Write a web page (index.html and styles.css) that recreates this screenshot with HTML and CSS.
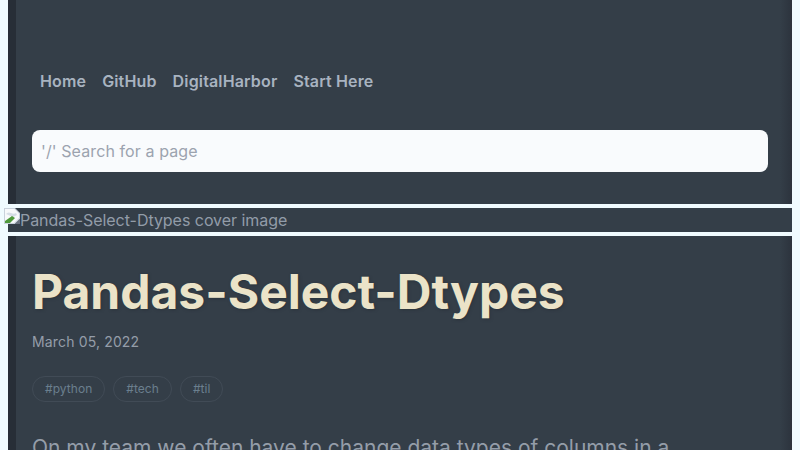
FILE: index.html
```html
<!DOCTYPE html>
<html lang="en">
<head>
<meta charset="utf-8">
<title>Pandas-Select-Dtypes</title>
<link rel="stylesheet" href="styles.css">
</head>
<body>
<header class="panel header">
  <nav class="nav">
    <a href="#">Home</a>
    <a href="#">GitHub</a>
    <a href="#">DigitalHarbor</a>
    <a href="#">Start Here</a>
  </nav>
  <input class="search" type="text" placeholder="'/' Search for a page">
</header>
<figure class="cover">
  <svg class="broken" width="16" height="16" viewBox="0 0 16 16" aria-hidden="true">
    <path d="M0 0H11L16 5V11L11 16H0Z" fill="#c9d2dc"/>
    <path d="M1 1H10.5L15 5.5V10L10 15H1Z" fill="#f7f9fb"/>
    <path d="M2 6Q4 3.5 7 5T12 5L13 7L9 9Z" fill="#d5dde6"/>
    <path d="M1 15V13L8 8L11 10L6 15Z" fill="#4f9a3c"/>
    <path d="M11 16L16 11V16Z" fill="#6b7280"/>
  </svg>
  <span>Pandas-Select-Dtypes cover image</span>
</figure>
<main class="panel article">
  <h1 class="title">Pandas-Select-Dtypes</h1>
  <p class="date">March 05, 2022</p>
  <ul class="tags">
    <li class="tag">#python</li>
    <li class="tag">#tech</li>
    <li class="tag">#til</li>
  </ul>
  <p class="lead">On my team we often have to change data types of columns in a</p>
</main>
</body>
</html>
```
FILE: styles.css
```css
* { box-sizing: border-box; }
html, body { height: 100%; }
body {
  margin: 0;
  padding: 0 8px;
  overflow: hidden;
  background: #f0fbff;
  font-family: Inter, "Liberation Sans", sans-serif;
  color: #9ca3af;
}
.panel {
  background: linear-gradient(90deg, #272e37 8px, #343e48 8px, #343e48 calc(100% - 12px), #2c333d 100%);
}
.header {
  height: 204px;
  padding: 69px 24px 0;
}
.nav {
  display: flex;
  gap: 16px;
  padding-left: 8px;
  height: 24px;
  align-items: center;
}
.nav a {
  color: #a8b3c0;
  font-weight: 600;
  font-size: 16px;
  letter-spacing: .15px;
  text-decoration: none;
}
.search {
  display: block;
  width: 100%;
  height: 42px;
  margin-top: 37px;
  padding: 0 9px;
  border: 0;
  border-radius: 8px;
  background: #f9fbfd;
  font: 16px Inter, "Liberation Sans", sans-serif;
  letter-spacing: .1px;
}
.search::placeholder { color: #9ca3af; opacity: 1; }
.cover {
  position: relative;
  display: flex;
  align-items: center;
  height: 24px;
  margin: 4px 0;
  padding-left: 12px;
  background: #343e48;
  color: #929ca8;
  font-size: 16px;
  letter-spacing: -.04px;
}
.broken {
  position: absolute;
  left: -4px;
  top: 0;
}
.article {
  height: 214px;
  padding: 24px 24px 0;
}
.title {
  margin: 0;
  color: #ebe3c8;
  font-size: 48px;
  line-height: 64px;
  font-weight: 700;
  text-shadow: 1px 1px 3px #2b333c;
}
.date {
  margin: 6px 0 0;
  font-size: 14px;
  line-height: 24px;
  letter-spacing: .15px;
  color: #949da9;
}
.tags {
  display: flex;
  gap: 8px;
  margin: 22px 0 0;
  padding: 0;
  list-style: none;
}
.tag {
  height: 26px;
  padding: 0 12px;
  border: 1px solid #414b56;
  border-radius: 13px;
  color: #6b7f8e;
  font-size: 12px;
  letter-spacing: .05px;
  line-height: 24px;
}
.lead {
  margin: 30px 0 0;
  font-size: 21px;
  line-height: 32px;
  color: #949da9;
  white-space: nowrap;
}
```
